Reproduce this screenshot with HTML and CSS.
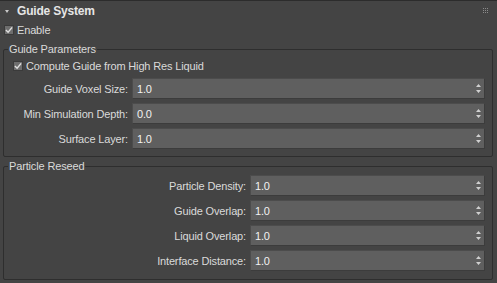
FILE: index.html
```html
<!DOCTYPE html>
<html>
<head>
    <title>Guide System</title>
    <link rel="stylesheet" href="styles.css">
</head>
<body>
    <div class="rollout">
        <div class="rollout-head">
            <span class="tri"></span>
            <span class="title">Guide System</span>
            <svg class="grip" width="6" height="6" viewBox="0 0 6 6">
                <rect x="0" y="0" width="1" height="1"/><rect x="2" y="0" width="1" height="1"/><rect x="4" y="0" width="1" height="1"/>
                <rect x="0" y="2" width="1" height="1"/><rect x="2" y="2" width="1" height="1"/><rect x="4" y="2" width="1" height="1"/>
                <rect x="0" y="4" width="1" height="1"/><rect x="2" y="4" width="1" height="1"/><rect x="4" y="4" width="1" height="1"/>
            </svg>
        </div>

        <label class="check enable">
            <span class="box"><svg width="9" height="8" viewBox="0 0 9 8"><path d="M1 4 L3.5 6.5 L8 1"/></svg></span>
            Enable
        </label>

        <fieldset class="group g1">
            <legend>Guide Parameters</legend>
            <label class="check compute">
                <span class="box"><svg width="9" height="8" viewBox="0 0 9 8"><path d="M1 4 L3.5 6.5 L8 1"/></svg></span>
                Compute Guide from High Res Liquid
            </label>
            <div class="field">
                <span class="lbl">Guide Voxel Size:</span>
                <div class="spin"><span>1.0</span><svg class="arrows" width="5" height="9" viewBox="0 0 5 9"><path d="M2.5 0 L5 3 L0 3 Z M0 6 L5 6 L2.5 9 Z"/></svg></div>
            </div>
            <div class="field">
                <span class="lbl">Min Simulation Depth:</span>
                <div class="spin"><span>0.0</span><svg class="arrows" width="5" height="9" viewBox="0 0 5 9"><path d="M2.5 0 L5 3 L0 3 Z M0 6 L5 6 L2.5 9 Z"/></svg></div>
            </div>
            <div class="field">
                <span class="lbl">Surface Layer:</span>
                <div class="spin"><span>1.0</span><svg class="arrows" width="5" height="9" viewBox="0 0 5 9"><path d="M2.5 0 L5 3 L0 3 Z M0 6 L5 6 L2.5 9 Z"/></svg></div>
            </div>
        </fieldset>

        <fieldset class="group g2">
            <legend>Particle Reseed</legend>
            <div class="field">
                <span class="lbl">Particle Density:</span>
                <div class="spin"><span>1.0</span><svg class="arrows" width="5" height="9" viewBox="0 0 5 9"><path d="M2.5 0 L5 3 L0 3 Z M0 6 L5 6 L2.5 9 Z"/></svg></div>
            </div>
            <div class="field">
                <span class="lbl">Guide Overlap:</span>
                <div class="spin"><span>1.0</span><svg class="arrows" width="5" height="9" viewBox="0 0 5 9"><path d="M2.5 0 L5 3 L0 3 Z M0 6 L5 6 L2.5 9 Z"/></svg></div>
            </div>
            <div class="field">
                <span class="lbl">Liquid Overlap:</span>
                <div class="spin"><span>1.0</span><svg class="arrows" width="5" height="9" viewBox="0 0 5 9"><path d="M2.5 0 L5 3 L0 3 Z M0 6 L5 6 L2.5 9 Z"/></svg></div>
            </div>
            <div class="field">
                <span class="lbl">Interface Distance:</span>
                <div class="spin"><span>1.0</span><svg class="arrows" width="5" height="9" viewBox="0 0 5 9"><path d="M2.5 0 L5 3 L0 3 Z M0 6 L5 6 L2.5 9 Z"/></svg></div>
            </div>
        </fieldset>
    </div>
</body>
</html>
```

FILE: styles.css
```css
body {
    margin: 0;
    background-color: #444444;
    color: #dadada;
    font-family: "Liberation Sans", Arial, sans-serif;
    font-size: 11px;
    letter-spacing: -0.15px;
}

.rollout {
    border-top: 1px solid #2c2c2c;
    height: 282px;
    overflow: hidden;
}

.rollout-head {
    display: flex;
    align-items: center;
    height: 20px;
    padding: 0 8px 0 5px;
}

.tri {
    width: 0;
    height: 0;
    border-left: 2.5px solid transparent;
    border-right: 2.5px solid transparent;
    border-top: 3px solid #c8c8c8;
    margin-right: 8px;
}

.title {
    font-size: 12px;
    font-weight: bold;
    letter-spacing: -0.2px;
    color: #e6e6e6;
    flex: 1;
}

.grip {
    fill: #8c8c8c;
    margin-top: -1px;
}

.check {
    display: flex;
    align-items: center;
    height: 18px;
}

.enable {
    padding-left: 4px;
    margin-bottom: 3px;
}

.compute {
    padding-left: 9px;
    height: 16px;
    margin: 2px 0 4px;
}

.box {
    width: 10px;
    height: 10px;
    box-sizing: border-box;
    background-color: #6e6e6e;
    border: 1px solid #3a3a3a;
    margin-right: 3px;
    display: flex;
    align-items: center;
    justify-content: center;
}

.box svg path {
    fill: none;
    stroke: #e0e0e0;
    stroke-width: 1.6;
}

.group {
    margin: 0 4px 0 3px;
    padding: 0 7px 7px 0;
    border: 1px solid #2e2e2e;
    border-radius: 2px;
}

.group legend {
    margin-left: 4px;
    padding: 0 1px;
    line-height: 14px;
    color: #dadada;
}

.g2 {
    margin-top: 2px;
    padding-top: 2px;
    padding-bottom: 8px;
}

.field {
    display: grid;
    grid-template-columns: 124px 1fr;
    column-gap: 4px;
    align-items: center;
    margin-bottom: 4px;
}

.field:last-child {
    margin-bottom: 0;
}

.g2 .field {
    grid-template-columns: 242px 1fr;
}

.lbl {
    text-align: right;
}

.spin {
    height: 21px;
    box-sizing: border-box;
    background-color: #5f5f5f;
    border: 1px solid #3c3c3c;
    border-top-color: #4c4c4c;
    border-left-color: #4c4c4c;
    display: flex;
    align-items: center;
    padding: 0 3px 0 4px;
    color: #f2f2f2;
}

.spin span {
    flex: 1;
}

.arrows {
    fill: #d0d0d0;
}
```
